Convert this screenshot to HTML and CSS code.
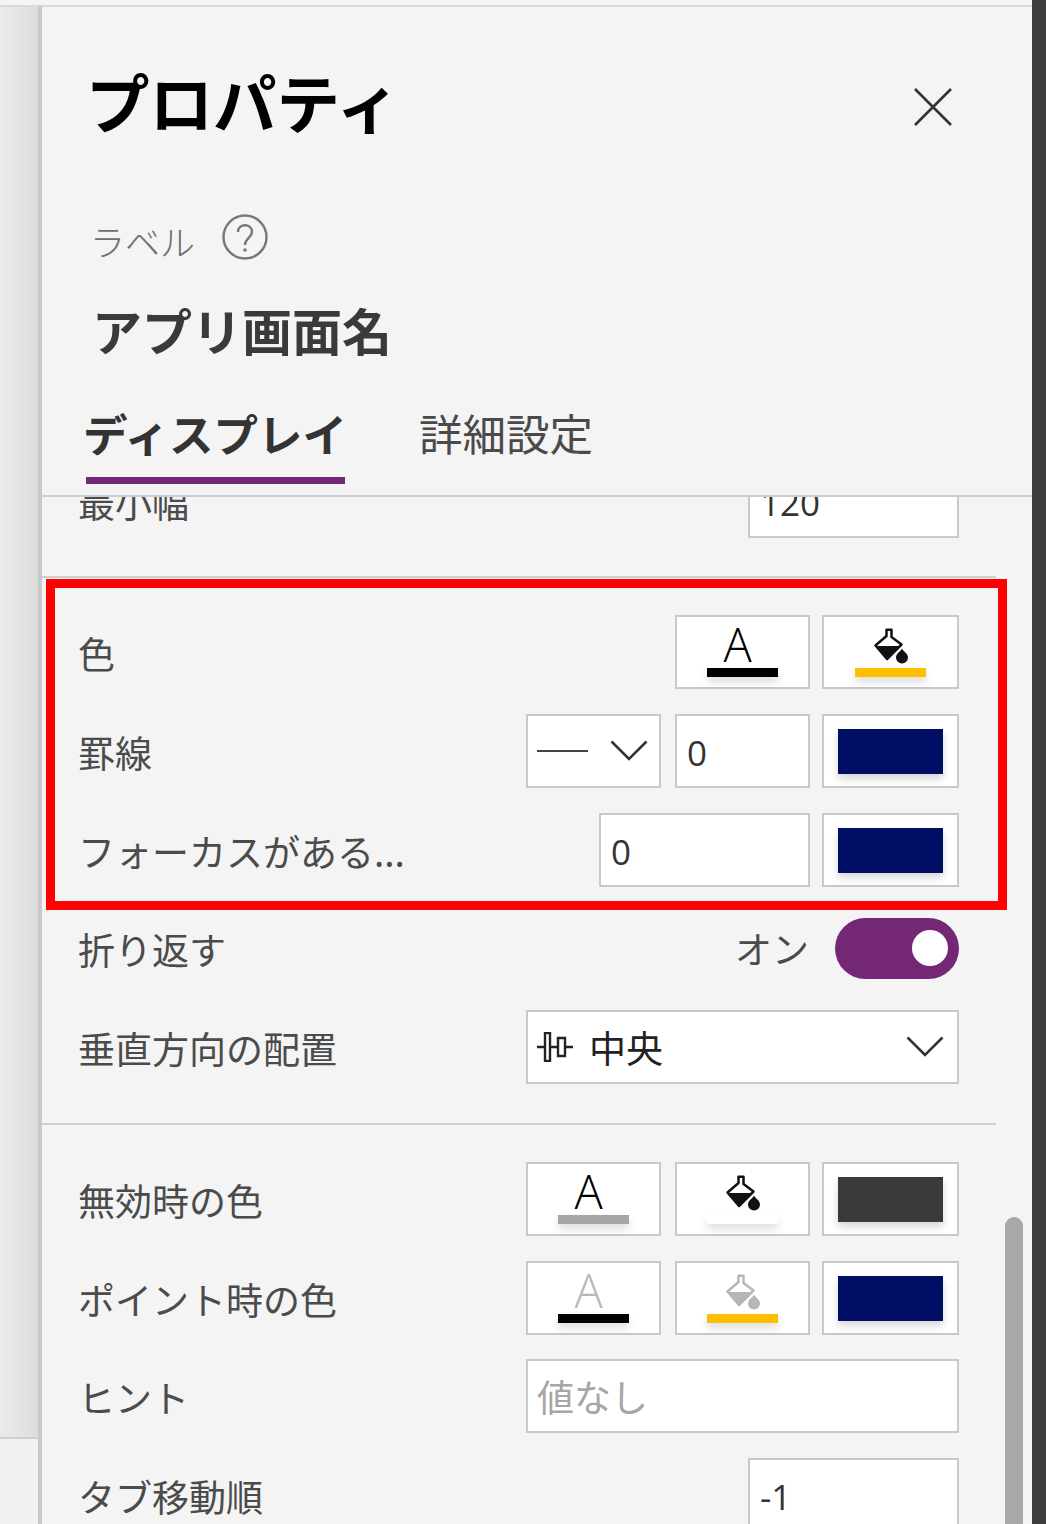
FILE: index.html
```html
<!DOCTYPE html>
<html lang="ja">
<head>
<meta charset="utf-8">
<title>プロパティ</title>
<link rel="stylesheet" href="styles.css">
</head>
<body>
<svg class="defs" width="0" height="0" aria-hidden="true">
  <symbol id="bucket" viewBox="0 0 36 36">
    <path class="b-fill" d="M3 18 H26.500 L14 31 Z"/>
    <path class="b-line" d="M2.500 17.500 L13.500 8 V1.800 H18.500 V9 L28.500 16.500 L14 31 Z"/>
    <path class="b-fill" d="M29 20.500 C30 23 35 25.500 35 29.500 A6 6 0 0 1 23 29.500 C23 25.500 28 23 29 20.500 Z"/>
  </symbol>
  <symbol id="chev" viewBox="0 0 38 22">
    <path d="M1.500 1.500 L19 19 L36.500 1.500" fill="none" stroke="currentColor" stroke-width="2.600"/>
  </symbol>
</svg>
<div class="app">
  <div class="side"><div class="side-top"></div><div class="side-bottom"></div></div>
  <main class="panel">
    <header class="head">
      <div class="title-row">
        <h1 class="title">プロパティ</h1>
        <svg class="close" viewBox="0 0 38 38"><path d="M1 1 L37 37 M37 1 L1 37"/></svg>
      </div>
      <div class="type-row">
        <span class="type">ラベル</span>
        <svg class="help" viewBox="0 0 46 46">
          <circle cx="23" cy="23" r="21.500"/>
          <path d="M16 18 C16 9 30 9 30 18 C30 24 23 24 23 31"/>
          <circle class="dot" cx="23" cy="36" r="1.800"/>
        </svg>
      </div>
      <div class="name">アプリ画面名</div>
      <nav class="tabs">
        <span class="tab active">ディスプレイ</span>
        <span class="tab">詳細設定</span>
      </nav>
    </header>
    <div class="scroll">
      <div class="row clipped">
        <span class="label">最小幅</span>
        <div class="ctrls"><div class="box w210 num">120</div></div>
      </div>
      <hr class="rule first-rule">
      <div class="row">
        <span class="label">色</span>
        <div class="ctrls">
          <div class="box w134 stack"><span class="glyph">A</span><i class="bar black"></i></div>
          <div class="box w136 stack"><svg class="bucket"><use href="#bucket"/></svg><i class="bar amber"></i></div>
        </div>
      </div>
      <div class="row">
        <span class="label">罫線</span>
        <div class="ctrls">
          <div class="box w134 linestyle"><i class="dash"></i><svg class="chev"><use href="#chev"/></svg></div>
          <div class="box w134 num">0</div>
          <div class="box w136 swatchbox"><i class="swatch navy"></i></div>
        </div>
      </div>
      <div class="row focus-row">
        <span class="label">フォーカスがある...</span>
        <div class="ctrls">
          <div class="box w210 num">0</div>
          <div class="box w136 swatchbox"><i class="swatch navy"></i></div>
        </div>
      </div>
      <div class="row">
        <span class="label">折り返す</span>
        <div class="ctrls toggle-wrap">
          <span class="toggle-text">オン</span>
          <div class="toggle"><i class="knob"></i></div>
        </div>
      </div>
      <div class="row last">
        <span class="label">垂直方向の配置</span>
        <div class="ctrls">
          <div class="box w432 select">
            <svg class="valign" viewBox="0 0 36 30"><path d="M0 15 H8 M13 15 H21 M28 15 H36 M8 1 H13 V29 H8 Z M21 6 H28 V24 H21 Z"/></svg>
            <span class="sel-text">中央</span>
            <svg class="chev"><use href="#chev"/></svg>
          </div>
        </div>
      </div>
      <hr class="rule">
      <div class="row">
        <span class="label">無効時の色</span>
        <div class="ctrls">
          <div class="box w134 stack"><span class="glyph">A</span><i class="bar grey"></i></div>
          <div class="box w134 stack"><svg class="bucket"><use href="#bucket"/></svg><i class="bar white"></i></div>
          <div class="box w136 swatchbox"><i class="swatch dark"></i></div>
        </div>
      </div>
      <div class="row">
        <span class="label">ポイント時の色</span>
        <div class="ctrls">
          <div class="box w134 stack"><span class="glyph faded">A</span><i class="bar black"></i></div>
          <div class="box w134 stack"><svg class="bucket faded"><use href="#bucket"/></svg><i class="bar amber"></i></div>
          <div class="box w136 swatchbox"><i class="swatch navy"></i></div>
        </div>
      </div>
      <div class="row tight">
        <span class="label">ヒント</span>
        <div class="ctrls"><div class="box w432 placeholder">値なし</div></div>
      </div>
      <div class="row">
        <span class="label">タブ移動順</span>
        <div class="ctrls"><div class="box w210 num">-1</div></div>
      </div>
      <div class="thumb"></div>
    </div>
  </main>
  <div class="edge"></div>
</div>
<div class="callout"></div>
</body>
</html>
```

FILE: styles.css
```css
* { box-sizing: border-box; }
html, body { margin: 0; height: 100%; overflow: hidden; }
body {
  background: #f4f4f4;
  font-family: "Noto Sans CJK JP", "Noto Sans", sans-serif;
  color: #3b3b3b;
}
.defs { position: absolute; }
.app {
  display: flex;
  height: 1524px;
  padding-top: 5px;
  background: #f4f4f4;
}
.side {
  width: 42px;
  flex: none;
  display: flex;
  flex-direction: column;
  border-top: 2px solid #d9d9d9;
  border-right: 4px solid #c9c9c9;
}
.side-top {
  height: 1432px;
  background: linear-gradient(90deg, #ebebeb, #dcdcdc);
  border-bottom: 2px solid #cfcfcf;
}
.side-bottom { flex: 1; background: #f1f1f1; }
.panel {
  flex: 1;
  min-width: 0;
  display: flex;
  flex-direction: column;
  border-top: 2px solid #d9d9d9;
}
.edge { width: 14px; flex: none; background: #3c3c3c; margin-top: -5px; }

.head {
  height: 490px;
  flex: none;
  padding: 48px 0 0 44px;
  border-bottom: 2px solid #cdcdcd;
}
.title-row { display: flex; justify-content: space-between; align-items: center; height: 90px; padding-right: 80px; }
.title { margin: 0; font-size: 63.500px; font-weight: 700; line-height: 90px; color: #000; }
.close { width: 38px; height: 38px; margin-top: 14px; }
.close path { stroke: #333; stroke-width: 2.600; fill: none; }
.type-row { display: flex; align-items: center; gap: 27px; height: 52px; margin-top: 68px; padding-left: 4px; }
.type { font-size: 35px; line-height: 52px; padding-top: 3px; color: #6f6f6f; font-weight: 300; }
.help { width: 46px; height: 46px; margin-top: -4px; }
.help circle, .help path { fill: none; stroke: #777; stroke-width: 2.400; }
.help .dot { fill: #777; stroke: none; }
.name { font-size: 50px; font-weight: 700; line-height: 70px; color: #3a3a3a; margin-top: 29px; padding-left: 6px; }
.tabs { display: flex; gap: 74px; margin-top: 39px; }
.tab { font-size: 43.500px; line-height: 60px; height: 73px; color: #4a4a4a; white-space: nowrap; }
.tab.active {
  width: 259px;
  height: 81px;
  font-size: 44.500px;
  font-weight: 700;
  color: #333;
  text-indent: -3px;
  border-bottom: 7px solid #742774;
}

.scroll { flex: 1; min-height: 0; overflow: hidden; position: relative; padding-right: 36px; }
.row {
  display: flex;
  align-items: center;
  justify-content: space-between;
  height: 74px;
  margin-bottom: 25px;
  padding: 0 37px 0 36px;
}
.row.last { margin-top: 1px; margin-bottom: 39px; }
.row.clipped { margin-top: -33px; margin-bottom: 38px; height: 74px; }
.row.focus-row { margin-top: 1px; margin-bottom: 24px; }
.row.tight { margin-top: -1px; }
.label { font-size: 37px; line-height: 74px; padding-top: 2px; color: #4b4b4b; white-space: nowrap; }
.ctrls { display: flex; gap: 14px; align-items: center; }
.box {
  height: 74px;
  flex: none;
  background: #fff;
  border: 2px solid #c9c9c9;
  color: #333;
}
.w134 { width: 135px; }
.w136 { width: 137px; margin-left: -2px; }
.w210 { width: 211px; }
.w432 { width: 433px; }
.num {
  font-family: "Open Sans", "Noto Sans", sans-serif;
  font-size: 35px;
  line-height: 74px;
  padding-left: 10px;
}
.placeholder { font-size: 37px; line-height: 70px; padding-left: 9px; color: #a6a6a6; }
.rule { margin: 0 0 37px; border: 0; height: 2px; background: #cfcfcf; }
.first-rule { margin-bottom: 37px; }

.stack { display: flex; flex-direction: column; align-items: center; position: relative; }
.glyph {
  font-family: "Open Sans", "Liberation Sans", sans-serif;
  font-weight: 300;
  font-size: 47px;
  line-height: 44px;
  margin-top: 5px;
  margin-bottom: 2px;
  margin-left: -10px;
  color: #000;
}
.glyph.faded { color: #b8b8b8; }
.bar {
  width: 71px;
  height: 9px;
  margin-top: 0;
  box-shadow: 0 5px 8px rgba(0,0,0,.14);
}
.black { background: #000; }
.amber { background: #ffbf00; }
.grey { background: #a6a6a6; }
.white { background: #fff; }
.bucket { width: 36px; height: 36px; margin: 11px 0 4px; flex: none; }
.b-fill { fill: #111; }
.b-line { fill: none; stroke: #111; stroke-width: 2.500; stroke-linejoin: round; }
.bucket.faded { opacity: .3; }

.swatchbox { display: flex; align-items: center; justify-content: center; }
.swatch { width: 105px; height: 45px; box-shadow: 0 5px 8px rgba(0,0,0,.16); }
.navy { background: #000f64; }
.dark { background: #3a3a3a; }

.linestyle { display: flex; align-items: center; justify-content: space-between; padding: 0 11px 0 9px; }
.dash { width: 51px; height: 2px; background: #444; }
.chev { width: 38px; height: 22px; color: #333; flex: none; }

.toggle-wrap { gap: 26px; }
.toggle-text { font-size: 37px; line-height: 60px; color: #4b4b4b; }
.toggle {
  width: 124px;
  height: 61px;
  border-radius: 31px;
  background: #742774;
  display: flex;
  align-items: center;
  justify-content: flex-end;
  padding-right: 11px;
}
.knob { width: 36px; height: 36px; border-radius: 50%; background: #fff; display: block; }

.select { display: flex; align-items: center; padding: 0 13px 0 9px; }
.valign { width: 36px; height: 30px; flex: none; }
.valign path { fill: none; stroke: #222; stroke-width: 2.400; }
.sel-text { font-size: 37px; line-height: 70px; margin-left: 16px; flex: 1; color: #222; }

.thumb {
  position: absolute;
  right: 9px;
  top: 720px;
  bottom: -20px;
  width: 18px;
  border-radius: 9px;
  background: #a8a8a8;
}
.callout {
  position: absolute;
  left: 46px;
  top: 579px;
  width: 961px;
  height: 331px;
  border: 9px solid #f00;
  pointer-events: none;
}
```
